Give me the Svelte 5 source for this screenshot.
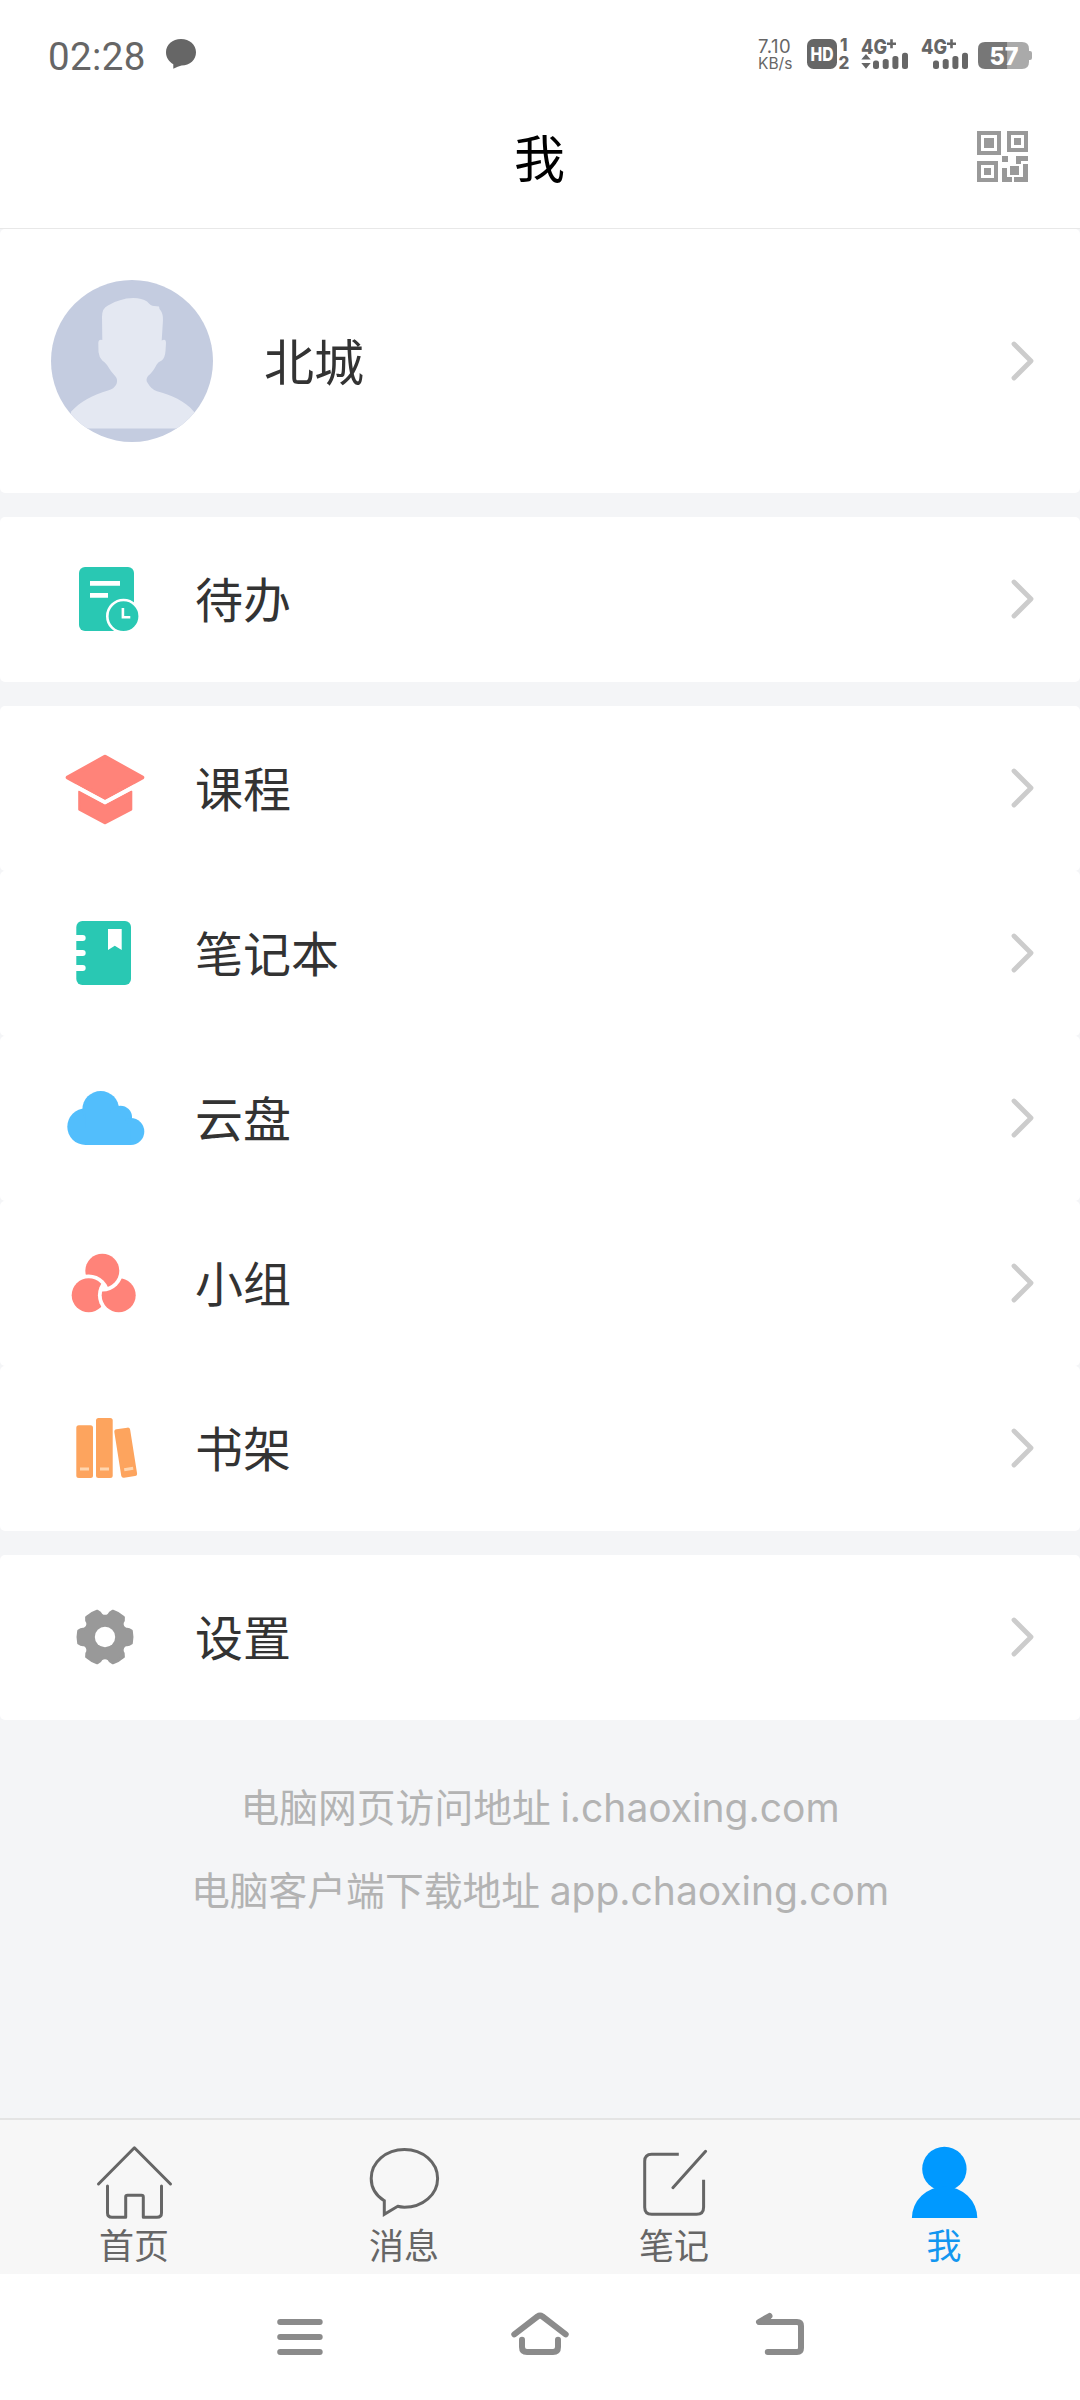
<script>
	const groups = [
		[{ id: "todo", label: "待办" }],
		[
			{ id: "course", label: "课程" },
			{ id: "notebook", label: "笔记本" },
			{ id: "cloud", label: "云盘" },
			{ id: "group", label: "小组" },
			{ id: "shelf", label: "书架" }
		],
		[{ id: "settings", label: "设置" }]
	];

	const tabs = [
		{ id: "home", label: "首页" },
		{ id: "message", label: "消息" },
		{ id: "note", label: "笔记" },
		{ id: "me", label: "我" }
	];

	let active = $state("me");

	const polar = (r, deg) => {
		const a = (deg * Math.PI) / 180;
		return `${(45 + r * Math.cos(a)).toFixed(2)} ${(45 + r * Math.sin(a)).toFixed(2)}`;
	};

	// six teeth, with a soft valley between each pair
	const gearPath = () => {
		let d = "";
		for (let a = 0; a < 360; a += 60) {
			d += `${a === 0 ? "M" : "L"}${polar(27, a - 13)}Q${polar(27.6, a)} ${polar(27, a + 13)}`;
			d += `Q${polar(25, a + 19)} ${polar(22.5, a + 20)}Q${polar(19, a + 30)} ${polar(22.5, a + 40)}Q${polar(25, a + 41)} ${polar(27, a + 47)}`;
		}
		return d + "Z";
	};
</script>

{#snippet chevron()}
	<svg class="chevron" width="24" height="40" viewBox="0 0 24 40">
		<path d="M3 3L20 20L3 37" />
	</svg>
{/snippet}

{#snippet signal(arrows)}
	<svg class="signal" width="50" height="32" viewBox="0 0 50 32">
		<text x="0" y="16" font-size="20" textLength="26" lengthAdjust="spacingAndGlyphs">4G</text>
		<path d="M26 5.8h9M30.500 1.300v9" stroke="#666" stroke-width="2.600" />
		{#if arrows}
			<path d="M0.300 21.500L5 16L9.700 21.500ZM0.300 25L5 30.700L9.700 25Z" />
		{/if}
		<rect x="12" y="22.500" width="6" height="8.500" rx="2.500" />
		<rect x="21.700" y="21" width="6" height="10" rx="2.500" />
		<rect x="31.400" y="18" width="6" height="13" rx="2.500" />
		<rect x="41" y="14.700" width="6" height="16.300" rx="2.500" />
	</svg>
{/snippet}

<div class="screen">
	<div class="status">
		<span class="time">02:28</span>
		<svg class="bubble" width="30" height="30" viewBox="0 0 30 30">
			<path d="M15 0C23.500 0 30 5.500 30 13.300S24 26.500 15.500 26.500Q12 27.300 7.300 29.800V25.200C3 22.700 0 18.500 0 13.300C0 5.500 6.500 0 15 0Z" />
		</svg>
		<div class="speed"><span>7.10</span><small>KB/s</small></div>
		<svg class="hd" width="44" height="32" viewBox="0 0 44 32">
			<rect x="0" y="1" width="30" height="30" rx="6.500" />
			<text x="3.500" y="22.500" font-size="18.500" textLength="23" lengthAdjust="spacingAndGlyphs" fill="#fff">HD</text>
			<text x="33" y="13" font-size="17">1</text>
			<text x="31.500" y="30.500" font-size="17">2</text>
		</svg>
		{@render signal(true)}
		{@render signal(false)}
		<svg class="battery" width="55" height="32" viewBox="0 0 55 32">
			<path d="M29.500 4H44Q51 4 51 11V13H52Q54 13 54 15V20Q54 22 52 22H51V24Q51 31 44 31H29.500Z" fill="#aaa" />
			<path d="M29.500 4H7Q0 4 0 11V24Q0 31 7 31H29.500Z" fill="#777" />
			<text x="11.500" y="27" font-size="25" textLength="29" lengthAdjust="spacingAndGlyphs" fill="#fff">57</text>
		</svg>
	</div>

	<header>
		<h1>我</h1>
		<svg class="qr" width="51" height="51" viewBox="0 0 51 51">
			<g fill="none" stroke="#999" stroke-width="4">
				<rect x="2" y="2" width="20" height="20" />
				<rect x="32" y="2" width="17" height="17" />
				<rect x="2" y="32" width="17" height="17" />
			</g>
			<path d="M7 7h10v10h-10ZM37 7h7v7h-7ZM7 37h7v7h-7ZM25 25h6v6h-6ZM39 25h12v5h-7v3h-5ZM46 33h5v18h-14v-5h9ZM25 37h5v9h5v5h-10ZM33 35h9v9h-9Z" />
		</svg>
	</header>

	<main>
		<div class="card profile">
			<svg class="avatar" width="162" height="162" viewBox="0 0 162 162">
				<path
					d="M51.300 60L51 37Q51 28 57 25.500Q62 22 69 20.300Q75 18 82.300 18Q91 18 96 21.500Q100 26 103 26L108 26.500Q108 29 110 31Q112 34 112 40L110.700 60.500Q115 58 115 63L114.500 71Q114 78 110.700 80.500Q107 82 105.700 84.500Q102 92 97 96Q94 100 97 103.500Q100 109 106 111.300C120 115 134 121 143 131.700V148.500H20V131.700C29 122 42 114.500 57 110.500Q63 109 65.500 104Q67 99 64.500 96.500Q60 92 56 85Q54 82 51.300 80.500Q48 77 47.500 72L47.300 63Q47.500 59 51.300 60Z"
				/>
			</svg>
			<span class="name">北城</span>
			{@render chevron()}
		</div>

		{#each groups as group}
			<div class="group">
				{#each group as item}
					<div class="card row">
						<svg class="icon" width="90" height="91" viewBox="0 0 90 91">
							{#if item.id === "todo"}
								<rect x="19" y="13" width="55" height="64" rx="6" fill="#29c8b3" />
								<path d="M30 29.300H60M30 41.300H48" stroke="#fff" stroke-width="4.700" />
								<circle cx="63.500" cy="62.200" r="16.200" fill="#29c8b3" stroke="#fff" stroke-width="2.600" />
								<path d="M62.900 54V63.200H70.300" fill="none" stroke="#fff" stroke-width="2.600" />
							{:else if item.id === "course"}
								<g fill="#ff8379" stroke="#ff8379" stroke-width="4" stroke-linejoin="round">
									<path d="M45 13.800L82.300 34.500L45 55L7.700 34.500Z" />
									<path stroke-width="2" d="M19.200 48.500L45 62.500L71.300 48.500V66.500L45 80.300L19.200 66.500Z" />
								</g>
								<path d="M15 43.200L45 59.300L75 43.200" fill="none" stroke="#fff" stroke-width="4" />
							{:else if item.id === "notebook"}
								<rect x="16.300" y="13" width="54.700" height="64" rx="6" fill="#29c8b3" />
								<path d="M14 30H22.700M14 45H22.700M14 60H22.700" stroke="#fff" stroke-width="6" stroke-linecap="round" />
								<path d="M48 21H61.700V42L54.800 37.700L48 42Z" fill="#fff" />
							{:else if item.id === "cloud"}
								<g fill="#52befc">
									<circle cx="25.600" cy="53.700" r="18.300" />
									<circle cx="40.700" cy="36.300" r="18.300" />
									<circle cx="60.500" cy="44.200" r="11.500" />
									<circle cx="70.800" cy="58.500" r="13.500" />
									<path d="M25.600 40H60L70.800 55V72H25.600Z" />
								</g>
							{:else if item.id === "group"}
								<mask id="cut-top"><rect width="90" height="91" fill="#fff" /><circle cx="28.700" cy="57.300" r="20.800" /></mask>
								<mask id="cut-left"><rect width="90" height="91" fill="#fff" /><circle cx="58.700" cy="57.300" r="20.800" /></mask>
								<mask id="cut-right"><rect width="90" height="91" fill="#fff" /><circle cx="42.300" cy="32.700" r="20.800" /></mask>
								<g fill="#ff8379">
									<circle cx="42.300" cy="32.700" r="17" mask="url(#cut-top)" />
									<circle cx="28.700" cy="57.300" r="17" mask="url(#cut-left)" />
									<circle cx="58.700" cy="57.300" r="17" mask="url(#cut-right)" />
								</g>
							{:else if item.id === "shelf"}
								<g fill="#fda45e">
									<rect x="16.300" y="22.300" width="16.700" height="52.700" rx="2.500" />
									<rect x="36" y="15" width="16.700" height="60" rx="2.500" />
									<rect x="57.700" y="25.200" width="16" height="49" rx="2.500" transform="rotate(-9 65.700 49.700)" />
								</g>
								<path d="M20 66H29M40 66H49M64.200 66.700L73.200 65.200" stroke="#ffd5ae" stroke-width="3" />
							{:else}
								<path d={gearPath()} fill="#999" stroke="#999" stroke-width="3" stroke-linejoin="round" />
								<circle cx="45" cy="45" r="10.200" fill="#fff" />
							{/if}
						</svg>
						<span class="label">{item.label}</span>
						{@render chevron()}
					</div>
				{/each}
			</div>
		{/each}

		<div class="links">
			<p>电脑网页访问地址 <span>i.chaoxing.com</span></p>
			<p>电脑客户端下载地址 <span>app.chaoxing.com</span></p>
		</div>
	</main>

	<nav class="tabs">
		{#each tabs as tab}
			<button class:active={active === tab.id} onclick={() => (active = tab.id)}>
				<svg width="90" height="84" viewBox="0 0 90 84">
					{#if tab.id === "home"}
						<path d="M8.500 44L44.400 7.800L80.500 44" />
						<path d="M17.500 46V73Q17.500 77.300 22 77.300H35.700V57Q35.700 55.300 37.500 55.300H51.500Q53.300 55.300 53.300 57V77.300H67Q71.500 77.300 71.500 73V46" />
					{:else if tab.id === "message"}
						<path stroke-linejoin="miter" d="M24.300 60.700C16 55.500 11.200 47.500 11.200 38.400C11.200 22.200 26 9.500 44.400 9.500S77.600 22.200 77.600 38.400S62.800 67.200 44.400 67.200Q40.500 67.200 37.700 66.300L24.300 74.300Z" />
					{:else if tab.id === "note"}
						<path stroke-linecap="butt" d="M48.800 14.300H21.700Q14.700 14.300 14.700 21.300V67.300Q14.700 74.300 21.700 74.300H66.600Q73.600 74.300 73.600 67.300V39.700" />
						<path d="M42.900 47.700L75.600 11.300" />
					{:else}
						<g class="solid">
							<circle cx="44.400" cy="28.900" r="22.200" />
							<path d="M11.900 78A32.700 31.500 0 0 1 77.300 78Z" />
						</g>
					{/if}
				</svg>
				<span>{tab.label}</span>
			</button>
		{/each}
	</nav>

	<div class="system">
		<svg width="60" height="60" viewBox="0 0 60 60">
			<path d="M10.200 15H49.700M10.200 30H49.700M10.200 45H49.700" />
		</svg>
		<svg width="60" height="60" viewBox="0 0 60 60">
			<path d="M4.300 27.300L27.500 9.500Q30 7.800 32.500 9.500L55.700 27.300" />
			<path d="M12 32.700V40Q12 45 17 45H43Q48 45 48 40V32.700" />
		</svg>
		<svg width="60" height="60" viewBox="0 0 60 60">
			<path d="M19.500 9L9 15H47Q51 15 51 19V41Q51 45 47 45H17.800" />
			<path d="M18 11L13 14.500" />
		</svg>
	</div>
</div>

<style>
	:global(body) {
		margin: 0;
		background: #fff;
	}

	.screen {
		display: flex;
		flex-direction: column;
		width: 1080px;
		height: 2400px;
		background: #fff;
		color: #333;
		font-family: Roboto, "Noto Sans CJK SC", sans-serif;
	}

	svg {
		display: block;
		flex: none;
	}

	.status {
		display: flex;
		align-items: center;
		box-sizing: border-box;
		height: 108px;
		padding: 0 47px 0 48px;
		color: #666;
	}

	.status svg {
		overflow: visible;
		fill: #666;
	}

	.status text {
		font-family: Inter, Roboto, sans-serif;
		font-weight: 800;
	}

	.time {
		width: 118px;
		padding-top: 5px;
		font-size: 38.500px;
		letter-spacing: 0.400px;
		line-height: 44px;
	}

	.speed {
		display: flex;
		flex-direction: column;
		width: 49px;
		margin-left: auto;
		font-family: Inter, sans-serif;
		font-size: 18.500px;
		letter-spacing: 0.500px;
		line-height: 19px;
	}

	.speed small {
		font-size: 15.500px;
		letter-spacing: 0;
		line-height: 15px;
	}

	.signal {
		margin-left: 10px;
	}

	.battery {
		margin-left: 7px;
	}

	header {
		display: flex;
		justify-content: flex-end;
		align-items: center;
		flex: none;
		box-sizing: border-box;
		height: 121px;
		padding: 0 52px 24px;
		border-bottom: 1px solid #e8e8e8;
	}

	h1 {
		flex: 1;
		margin: 9px 0 0 50px;
		color: #000;
		font-size: 51px;
		font-weight: 400;
		line-height: 60px;
		text-align: center;
	}

	.qr {
		fill: #999;
	}

	main {
		flex: 1;
		background: #f4f5f7;
	}

	.card {
		display: flex;
		align-items: center;
		box-sizing: border-box;
		padding-right: 45px;
		border-radius: 5px;
		background: #fff;
	}

	.profile {
		height: 264px;
		padding-left: 51px;
	}

	.avatar {
		border-radius: 50%;
		background: #c4cce0;
		fill: #e4e8f2;
	}

	.name {
		margin-left: 51px;
		padding-top: 6px;
		font-size: 50px;
		line-height: 60px;
	}

	.chevron {
		margin-left: auto;
		fill: none;
		stroke: #ccc;
		stroke-width: 4.800;
		stroke-linecap: round;
		stroke-linejoin: round;
	}

	.row .chevron {
		margin-bottom: 1px;
	}

	.group {
		margin-top: 24px;
	}

	.row {
		height: 165px;
		padding-left: 60px;
	}

	.label {
		margin-left: 45px;
		padding-top: 5px;
		font-size: 48px;
		line-height: 60px;
	}

	.links {
		padding-top: 59px;
		color: #b3b3b3;
		text-align: center;
	}

	.links p {
		margin: 0 0 24px;
		font-size: 38.800px;
		line-height: 58px;
	}

	.links span {
		font-family: Inter, sans-serif;
		font-size: 39px;
	}

	.tabs {
		display: flex;
		box-sizing: border-box;
		height: 156px;
		border-top: 2px solid #e4e4e4;
		background: #f7f7f7;
	}

	.tabs button {
		display: flex;
		flex: 1;
		flex-direction: column;
		align-items: center;
		gap: 3px;
		padding: 20px 0 0;
		border: 0;
		background: none;
		color: #666;
		font: inherit;
		font-size: 35px;
		line-height: 42px;
	}

	.tabs button span {
		margin-right: 2px;
	}

	.tabs svg {
		fill: none;
		stroke: #666;
		stroke-width: 3;
		stroke-linecap: round;
		stroke-linejoin: round;
	}

	.tabs .solid {
		fill: #0099ff;
		stroke: none;
	}

	.tabs .active {
		color: #1296f0;
	}

	.system {
		display: flex;
		justify-content: center;
		gap: 180px;
		box-sizing: border-box;
		height: 126px;
		padding-top: 33px;
	}

	.system svg {
		fill: none;
		stroke: #8b8b8b;
		stroke-width: 6;
		stroke-linecap: round;
		stroke-linejoin: round;
	}
</style>
